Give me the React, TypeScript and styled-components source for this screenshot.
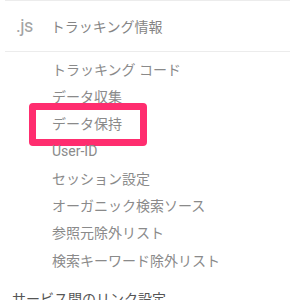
import React from 'react';
import styled, { createGlobalStyle } from 'styled-components';

const GlobalStyle = createGlobalStyle`
  html, body {
    margin: 0;
    padding: 0;
    background: #fff;
  }
  body {
    font-family: Roboto, "Noto Sans CJK JP", sans-serif;
    -webkit-font-smoothing: antialiased;
  }
`;

const items = [
  'トラッキング コード',
  'データ収集',
  'データ保持',
  'User-ID',
  'セッション設定',
  'オーガニック検索ソース',
  '参照元除外リスト',
  '検索キーワード除外リスト'
];

export default function App() {
  return (
    <>
      <GlobalStyle />
      <Screen>
        <Rule />
        <Header>
          <JsIcon>.js</JsIcon>
          <Title>トラッキング情報</Title>
        </Header>
        <Rule />
        <Menu>
          {items.map(item => (
            <MenuItem key={item} $marked={item === 'データ保持'}>
              {item}
            </MenuItem>
          ))}
        </Menu>
        <Section>
          <SectionTitle>サービス間のリンク設定</SectionTitle>
          <SectionLine />
        </Section>
      </Screen>
    </>
  );
}

const Screen = styled.div`
  width: 290px;
  height: 300px;
  overflow: hidden;
  background: #fff;
`;

const Rule = styled.div`
  height: 1px;
  margin-left: 5px;
  background: #ececec;
`;

const Header = styled.div`
  height: 50px;
  display: flex;
  align-items: center;
  padding-left: 16px;
  gap: 18px;
`;

const JsIcon = styled.span`
  font-family: Roboto, sans-serif;
  font-size: 18px;
  color: #a3a3a3;
  letter-spacing: -0.5px;
  margin-top: -2px;
`;

const Title = styled.span`
  font-family: "Noto Sans CJK JP", sans-serif;
  font-size: 14px;
  color: #858585;
`;

const Menu = styled.div`
  display: flex;
  flex-direction: column;
  padding-top: 3px;
  padding-left: 52px;
`;

const MenuItem = styled.div<{ $marked?: boolean }>`
  position: relative;
  height: 27.3px;
  display: flex;
  align-items: center;
  font-family: Roboto, "Noto Sans CJK JP", sans-serif;
  font-size: 14px;
  color: #8a8a8a;
  white-space: nowrap;

  ${p =>
    p.$marked &&
    `
    &::after {
      content: '';
      position: absolute;
      left: -23px;
      top: -7px;
      width: 104px;
      height: 29px;
      border: 7px solid #ff2d6f;
      border-radius: 4px;
    }
  `}
`;

const Section = styled.div`
  display: flex;
  align-items: center;
  gap: 10px;
  margin-top: 15px;
  padding-left: 12px;
`;

const SectionTitle = styled.span`
  font-family: "Noto Sans CJK JP", sans-serif;
  font-size: 14px;
  color: #555;
  white-space: nowrap;
`;

const SectionLine = styled.div`
  flex: 1;
  height: 1px;
  margin-top: 6px;
  background: #e6e6e6;
`;
